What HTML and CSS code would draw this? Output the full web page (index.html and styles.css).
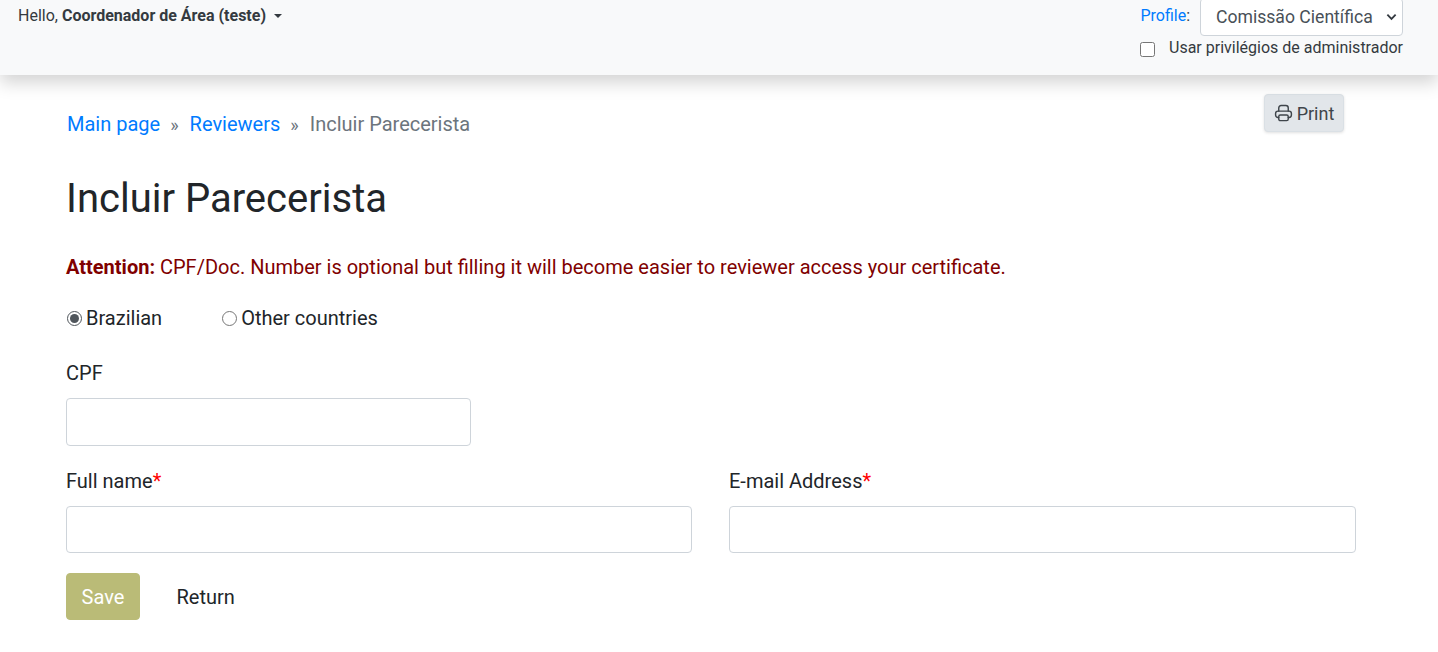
FILE: index.html
```html
<!DOCTYPE html>
<html lang="en">
<head>
<meta charset="utf-8">
<title>Incluir Parecerista</title>
<link rel="stylesheet" href="styles.css">
</head>
<body>
<header class="topbar">
  <div class="user-menu">Hello, <strong>Coordenador de Área (teste)</strong><span class="caret"></span></div>
  <div class="profile">
    <div class="profile-row">
      <span class="profile-label"><span class="link">Profile</span>:</span>
      <select class="profile-select"><option>Comissão Científica</option></select>
    </div>
    <label class="admin-row"><input type="checkbox" class="admin-check"><span>Usar privilégios de administrador</span></label>
  </div>
</header>
<main class="page">
  <div class="crumb-row">
    <nav class="breadcrumb">
      <a class="link" href="#">Main page</a><span class="sep">»</span><a class="link" href="#">Reviewers</a><span class="sep">»</span><span class="current">Incluir Parecerista</span>
    </nav>
    <button class="print" type="button">
      <svg class="print-icon" viewBox="0 0 24 24" fill="none" stroke="currentColor" stroke-width="1.8" stroke-linecap="round" stroke-linejoin="round"><path d="M6 9V5a3 3 0 0 1 3-3h6a3 3 0 0 1 3 3v4"/><path d="M6 17H5a3 3 0 0 1-3-3v-2a3 3 0 0 1 3-3h14a3 3 0 0 1 3 3v2a3 3 0 0 1-3 3h-1"/><rect x="6" y="14" width="12" height="7" rx="2"/></svg>Print
    </button>
  </div>
  <h1 class="title">Incluir Parecerista</h1>
  <p class="attention"><strong>Attention:</strong> CPF/Doc. Number is optional but filling it will become easier to reviewer access your certificate.</p>
  <div class="radios">
    <label class="radio"><input type="radio" name="nat" checked>Brazilian</label>
    <label class="radio"><input type="radio" name="nat">Other countries</label>
  </div>
  <div class="field cpf">
    <label class="field-label">CPF</label>
    <input class="input input-cpf" type="text">
  </div>
  <div class="two-col">
    <div class="field">
      <label class="field-label">Full name<span class="req">*</span></label>
      <input class="input" type="text">
    </div>
    <div class="field">
      <label class="field-label">E-mail Address<span class="req">*</span></label>
      <input class="input" type="text">
    </div>
  </div>
  <div class="actions">
    <button class="save" type="button">Save</button>
    <a class="return" href="#">Return</a>
  </div>
</main>
</body>
</html>
```
FILE: styles.css
```css
* { box-sizing: border-box; }
html, body { margin: 0; padding: 0; height: 100%; overflow: hidden; }
body { font-family: Roboto, "Liberation Sans", sans-serif; color: #212529; background: #fff; font-size: 20px; }
.topbar {
  height: 75px;
  background: #f8f9fa;
  display: flex;
  justify-content: space-between;
  padding: 0 35px 0 18px;
  box-shadow: 0 8px 16px rgba(0,0,0,.17);
  position: relative;
  clip-path: inset(0 0 -40px 0);
}
.user-menu { font-size: 16px; line-height: 24px; color: #343a40; padding-top: 4px; }
.user-menu strong { font-weight: 700; }
.caret { display: inline-block; margin-left: 8px; vertical-align: 3px; border-top: 4.8px solid #343a40; border-left: 4.8px solid transparent; border-right: 4.8px solid transparent; }
.profile { display: flex; flex-direction: column; align-items: flex-end; margin-top: -2px; }
.profile-row { display: flex; align-items: flex-start; gap: 10px; }
.profile-label { font-size: 16px; line-height: 24px; color: #343a40; margin-top: 6px; }
.link { color: #007bff; text-decoration: none; }
.profile-select {
  appearance: none;
  width: 203px; height: 38px;
  font: 400 17.6px Roboto, sans-serif;
  color: #495057;
  background: #fff url("data:image/svg+xml,%3Csvg xmlns='http://www.w3.org/2000/svg' viewBox='0 0 12 8'%3E%3Cpath d='M1.5 1.5 6 6l4.5-4.5' fill='none' stroke='%23343a40' stroke-width='2'/%3E%3C/svg%3E") no-repeat right 5px center / 11px 8px;
  border: 1px solid #ced4da;
  border-radius: 4px;
  padding: 0 0 0 15px;
}
.admin-row { display: flex; align-items: flex-start; font-size: 16px; line-height: 24px; color: #343a40; }
.admin-check { width: 15px; height: 15px; margin: 6px 14px 0 0; }
.page { padding: 0 82px 0 66px; }
.crumb-row { display: flex; justify-content: space-between; align-items: flex-start; padding-top: 19px; }
.breadcrumb { font-size: 20px; line-height: 30px; padding: 15px 0 0 1px; }
.sep { color: #6c757d; margin: 0 11px 0 10px; font-size: 18px; }
.current { color: #6c757d; }
.print {
  width: 80px; height: 38px;
  margin-right: 12px;
  background: #e2e6ea;
  color: #3f454b;
  border: 1px solid #dae0e5;
  border-radius: 4px;
  font: 400 18px Roboto, sans-serif;
  display: flex; align-items: center; justify-content: center; gap: 4px;
  padding: 0;
  box-shadow: 0 1px 3px rgba(0,0,0,.12);
}
.print-icon { width: 19px; height: 19px; }
.title { font-size: 40px; font-weight: 400; line-height: 48px; margin: 35px 0 0; }
.attention { font-size: 20px; line-height: 30px; color: #800000; margin: 29px 0 0; }
.attention strong { font-weight: 700; }
.radios { display: flex; gap: 59px; font-size: 20px; margin-top: 21px; color: #212529; }
.radio { display: flex; align-items: center; line-height: 30px; }
.radio input { margin: 0 4px 0 1px; width: 15px; height: 15px; accent-color: #50565c; }
.field { display: flex; flex-direction: column; }
.field-label { font-size: 20px; line-height: 30px; margin-bottom: 10px; }
.cpf { margin-top: 25px; }
.input { height: 47px; width: 100%; border: 1px solid #ced4da; border-radius: 4px; background: #fff; }
.input-cpf { width: 405px; height: 48px; }
.two-col { display: grid; grid-template-columns: 626px 627px; column-gap: 37px; margin-top: 20px; }
.req { color: #f00; }
.actions { display: flex; align-items: center; gap: 36.5px; margin-top: 20px; }
.save { width: 74px; height: 47px; background: #babb77; color: #fff; border: 1px solid #babb77; border-radius: 4px; font: 400 20px Roboto, sans-serif; padding: 0; }
.return { color: #212529; text-decoration: none; font-size: 20px; }
```
